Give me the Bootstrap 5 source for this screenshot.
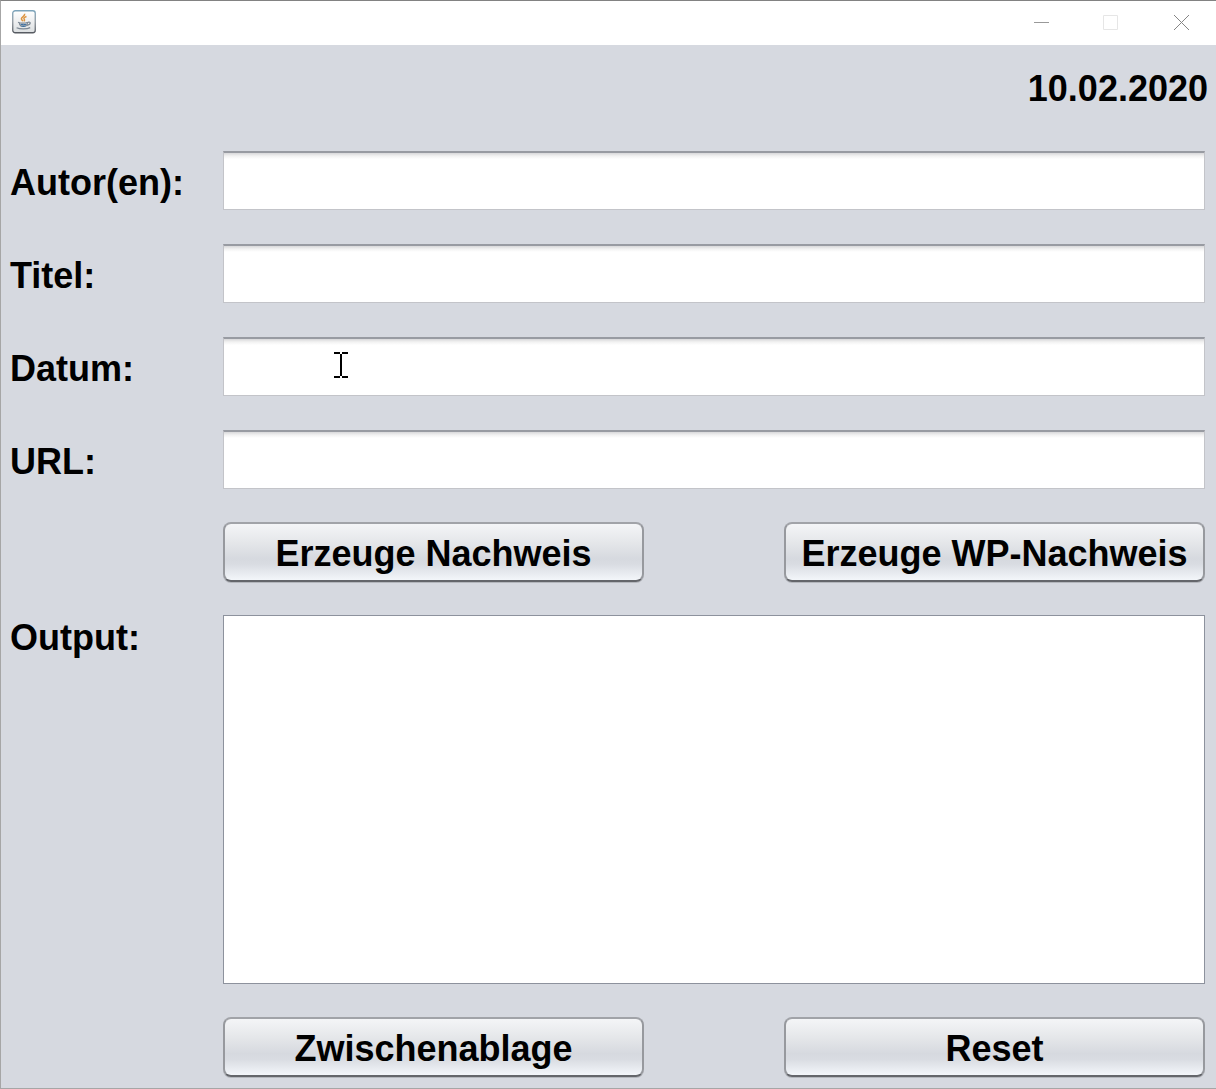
<!DOCTYPE html>
<html lang="de">
<head>
<meta charset="utf-8">
<meta name="viewport" content="width=device-width, initial-scale=1">
<title>Nachweis</title>
<link rel="stylesheet" href="https://cdn.jsdelivr.net/npm/bootstrap@5.3.0/dist/css/bootstrap.min.css">
<script src="https://cdn.jsdelivr.net/npm/bootstrap@5.3.0/dist/js/bootstrap.bundle.min.js"></script>
<style>
body {
  font-family: "Liberation Sans", Arial, sans-serif;
  font-size: 36px;
  font-weight: 700;
  line-height: 46px;
  color: #000;
  background: #d6d9e0;
}
.app-window { border: 1px solid #a6a6a6; border-top-color: #828282; border-right: 0; }
.title-bar { height: 44px; background: #fff; padding: 0 0 2px 11px; }
.win-btn { width: 70px; height: 42px; border: 0; background: none; padding: 0; }
.win-btn svg, .app-icon { display: block; }
.win-btn svg { margin: auto; }
.date-line { padding: 21px 8px 39px 0; }
.form-area { padding: 0 11px 11px 9px; gap: 33px; }
.form-label-cell { width: 213px; flex: none; }
.fields { gap: 34px; }
.fields .form-label-cell { padding-top: 4px; }
.nimbus-field {
  height: 59px;
  border: 1px solid #c3c4c9;
  border-top: 2px solid #989ba2;
  border-radius: 0;
  background: linear-gradient(#d8d8da, #f2f2f2 3px, #fff 6px);
  font-size: 36px;
}
.nimbus-area {
  border: 1px solid #8d929d;
  border-radius: 0;
  background: #fff;
  resize: none;
  font-size: 36px;
  min-height: 120px;
}
.btn-row { gap: 140px; padding-left: 213px; }
.nimbus-btn {
  flex: 1 1 0;
  height: 60px;
  padding: 3px 0 0;
  border: 2px solid;
  border-color: #a1a3a8 #97999e #64666b;
  border-radius: 8px;
  background: linear-gradient(#f4f5f7, #e4e6e9 35%, #d6d9df 62%, #d9dce2 72%, #f3f6fa);
  box-shadow: 0 1px 0 #b4b7bd;
  font: inherit;
  line-height: 46px;
  color: #000;
}
.ibeam { left: 111px; top: 15px; pointer-events: none; }
</style>
</head>
<body>
<div class="app-window min-vh-100 d-flex flex-column">
  <header class="title-bar d-flex align-items-center justify-content-between">
    <svg class="app-icon" width="24" height="24" viewBox="0 0 24 24" aria-hidden="true">
      <defs><linearGradient id="tile" x1="0" y1="0" x2="0" y2="1"><stop offset="0" stop-color="#fff"/><stop offset="1" stop-color="#dcdfe1"/></linearGradient>
      <linearGradient id="rim" x1="0" y1="0" x2="0" y2="1"><stop offset="0" stop-color="#7ca4bb"/><stop offset=".5" stop-color="#8e969d"/><stop offset="1" stop-color="#555960"/></linearGradient></defs>
      <rect x=".75" y=".75" width="22.5" height="22" rx="2.5" fill="url(#tile)" stroke="url(#rim)" stroke-width="1.3"/>
      <path d="M12.600 3.800c1 2.400-3.400 2.800-3.200 5 .1 1 1.100 1.500 1.500 2.400" fill="none" stroke="#dc9440" stroke-width="1.500"/>
      <path d="M14.500 6.500c-2.400.8-3.200 1.700-2.300 2.700.6.700.4 1.400-.4 2" fill="none" stroke="#dc9440" stroke-width="1.400"/>
      <path d="M6 12.300c2.500 1 7.300.9 10 0M7.200 13c.2 1.200.6 2.100 1.600 3h5c1-.9 1.500-1.800 1.700-3M15.800 12.300c3.300-.9 3.400 2.200-.9 3.100M4.600 17.700c3.500 1.700 10.200 1.600 13.600-.1" fill="none" stroke="#7c8793" stroke-width="1.200"/>
      <path d="M8.500 14.300c2 .6 4 .6 5.800 0M9.200 16c1.500.5 3 .5 4.400 0" fill="none" stroke="#3a6c9d" stroke-width="1.100"/>
    </svg>
    <div class="d-flex">
      <button type="button" class="win-btn" aria-label="Minimieren"><svg width="16" height="16" viewBox="0 0 16 16"><path d="M1 8.500h15" stroke="#999" fill="none"/></svg></button>
      <button type="button" class="win-btn" aria-label="Maximieren" disabled><svg width="16" height="16" viewBox="0 0 16 16"><path d="M.5 1.500h14v14h-14z" stroke="#e6e6e6" fill="none"/></svg></button>
      <button type="button" class="win-btn" aria-label="Schließen"><svg width="16" height="16" viewBox="0 0 16 16"><path d="M1 1l15 15M16 1L1 16" stroke="#858585" fill="none"/></svg></button>
    </div>
  </header>
  <main class="flex-grow-1 d-flex flex-column">
    <div class="date-line text-end">10.02.2020</div>
    <form class="form-area flex-grow-1 d-flex flex-column">
      <div class="fields d-flex flex-column">
        <div class="d-flex align-items-center">
          <label class="form-label-cell" for="autor">Autor(en):</label>
          <input class="form-control nimbus-field" type="text" id="autor">
        </div>
        <div class="d-flex align-items-center">
          <label class="form-label-cell" for="titel">Titel:</label>
          <input class="form-control nimbus-field" type="text" id="titel">
        </div>
        <div class="d-flex align-items-center">
          <label class="form-label-cell" for="datum">Datum:</label>
          <div class="position-relative flex-grow-1">
            <input class="form-control nimbus-field" type="text" id="datum">
            <svg class="ibeam position-absolute" width="14" height="26" viewBox="0 0 14 26" aria-hidden="true"><path d="M0 1h6M8 1h6M0 25h6M8 25h6M7 2v22" stroke="#000" stroke-width="2" fill="none"/></svg>
          </div>
        </div>
        <div class="d-flex align-items-center">
          <label class="form-label-cell" for="url">URL:</label>
          <input class="form-control nimbus-field" type="text" id="url">
        </div>
      </div>
      <div class="btn-row d-flex">
        <button type="button" class="btn nimbus-btn">Erzeuge Nachweis</button>
        <button type="button" class="btn nimbus-btn">Erzeuge WP-Nachweis</button>
      </div>
      <div class="d-flex flex-grow-1">
        <label class="form-label-cell" for="output">Output:</label>
        <textarea class="form-control nimbus-area" id="output"></textarea>
      </div>
      <div class="btn-row d-flex">
        <button type="button" class="btn nimbus-btn">Zwischenablage</button>
        <button type="reset" class="btn nimbus-btn">Reset</button>
      </div>
    </form>
  </main>
</div>
</body>
</html>
